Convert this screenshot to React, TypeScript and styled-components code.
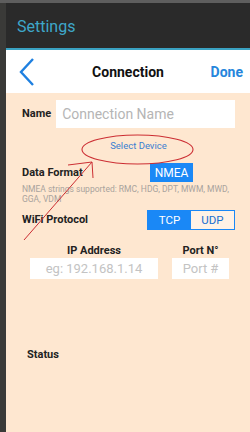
import React from 'react';
import styled, { createGlobalStyle } from 'styled-components';

const GlobalStyle = createGlobalStyle`
    html, body {
        margin: 0;
        padding: 0;
        width: 250px;
        height: 432px;
        overflow: hidden;
        background: #3a3a38;
        font-family: Roboto, "Noto Sans", "Liberation Sans", sans-serif;
    }
`;

const Screen = styled.div`
    position: relative;
    width: 250px;
    height: 432px;
    display: flex;
    flex-direction: column;
    border-top: 3px solid #5e5e5e;
    box-sizing: border-box;
`;

const Sheet = styled.div`
    flex: 1;
    margin-left: 6px;
    display: flex;
    flex-direction: column;
    background: #fee7d0;
`;

const TopBar = styled.div`
    height: 45px;
    background: #2a2a2a;
    border-bottom: 2px solid #3aa2c2;
    display: flex;
    align-items: center;
    padding-left: 11px;
    box-sizing: content-box;
`;

const TopTitle = styled.span`
    font-size: 16px;
    color: #3ea7c9;
    margin-top: 2px;
`;

const NavBar = styled.div`
    height: 43px;
    background: #ffffff;
    display: grid;
    grid-template-columns: 60px 1fr 60px;
    align-items: center;
`;

const BackButton = styled.div`
    display: flex;
    align-items: center;
    padding-left: 12px;
`;

const NavTitle = styled.span`
    font-size: 14px;
    font-weight: 700;
    color: #111;
    text-align: center;
`;

const DoneButton = styled.span`
    font-size: 14px;
    font-weight: 700;
    color: #2686dc;
    text-align: right;
    padding-right: 7px;
`;

const Content = styled.div`
    flex: 1;
    display: flex;
    flex-direction: column;
    padding: 7px 15px 0 16px;
`;

const Row = styled.div<{ mt?: number }>`
    display: flex;
    align-items: center;
    ${(p) => (p.mt ? `margin-top: ${p.mt}px;` : '')}
`;

const Label = styled.span`
    font-size: 11px;
    line-height: 14px;
    font-weight: 700;
    color: #222;
`;

const NameInput = styled.div`
    flex: 1;
    margin-left: 5px;
    height: 28px;
    background: #fff;
    display: flex;
    align-items: center;
    padding-left: 6px;
    font-size: 14px;
    color: #b5b5b5;
`;

const SelectDevice = styled.div`
    height: 35px;
    display: flex;
    align-items: center;
    justify-content: center;
    padding-left: 20px;
    font-size: 9.5px;
    color: #3b7fd1;
`;

const NmeaButton = styled.div`
    margin-left: auto;
    margin-right: 42px;
    width: 43px;
    height: 19px;
    background: #1a88f6;
    color: #fff;
    font-size: 12px;
    display: flex;
    align-items: center;
    justify-content: center;
`;

const Help = styled.div`
    margin-top: 3px;
    font-size: 8.5px;
    line-height: 9.5px;
    color: #a9a39d;
    white-space: nowrap;
`;

const Segment = styled.div`
    margin-left: auto;
    display: flex;
    border: 1.5px solid #1a88f6;
    height: 20px;
    box-sizing: border-box;
`;

const SegmentItem = styled.div<{ active?: boolean }>`
    width: 43px;
    display: flex;
    align-items: center;
    justify-content: center;
    font-size: 11.5px;
    background: ${(p) => (p.active ? '#1a88f6' : '#fff2e6')};
    color: ${(p) => (p.active ? '#fff' : '#1a6fd0')};
`;

const AddressGrid = styled.div`
    margin-top: 14px;
    display: grid;
    grid-template-columns: 128px 57px;
    column-gap: 14px;
    padding-left: 8px;
`;

const FieldLabel = styled(Label)`
    text-align: center;
`;

const FieldInput = styled.div`
    height: 21px;
    background: #fff;
    display: flex;
    align-items: center;
    justify-content: center;
    font-size: 13px;
    color: #c3c3c3;
`;

const StatusLabel = styled(Label)`
    margin-top: 69px;
    padding-left: 5px;
`;

const Annotation = styled.svg`
    position: absolute;
    left: 0;
    top: 0;
    pointer-events: none;
`;

const App: React.FC = () => {
    return (
        <>
            <GlobalStyle />
            <Screen>
                <Sheet>
                    <TopBar>
                        <TopTitle>Settings</TopTitle>
                    </TopBar>
                    <NavBar>
                        <BackButton>
                            <svg width="18" height="30" viewBox="0 0 18 30">
                                <path d="M15 2 L3 15 L15 28" fill="none" stroke="#1f80e0" strokeWidth="2.4" />
                            </svg>
                        </BackButton>
                        <NavTitle>Connection</NavTitle>
                        <DoneButton>Done</DoneButton>
                    </NavBar>
                    <Content>
                        <Row>
                            <Label>Name</Label>
                            <NameInput>Connection Name</NameInput>
                        </Row>
                        <SelectDevice>Select Device</SelectDevice>
                        <Row>
                            <Label>Data Format</Label>
                            <NmeaButton>NMEA</NmeaButton>
                        </Row>
                        <Help>
                            NMEA strings supported: RMC, HDG, DPT, MWM, MWD,
                            <br />
                            GGA, VDM
                        </Help>
                        <Row mt={6}>
                            <Label>WiFi Protocol</Label>
                            <Segment>
                                <SegmentItem active>TCP</SegmentItem>
                                <SegmentItem>UDP</SegmentItem>
                            </Segment>
                        </Row>
                        <AddressGrid>
                            <FieldLabel>IP Address</FieldLabel>
                            <FieldLabel>Port N°</FieldLabel>
                            <FieldInput>eg: 192.168.1.14</FieldInput>
                            <FieldInput>Port #</FieldInput>
                        </AddressGrid>
                        <StatusLabel>Status</StatusLabel>
                    </Content>
                </Sheet>
                <Annotation width="250" height="432" viewBox="0 0 250 432">
                    <ellipse cx="137.5" cy="146.5" rx="55.5" ry="14.5" fill="none" stroke="#cc2e33" strokeWidth="1.1" />
                    <path d="M24 237 L92 159" fill="none" stroke="#cc2e33" strokeWidth="1" />
                    <path d="M68 162 L92 159 L93 175" fill="none" stroke="#cc2e33" strokeWidth="1" />
                </Annotation>
            </Screen>
        </>
    );
};

export default App;
